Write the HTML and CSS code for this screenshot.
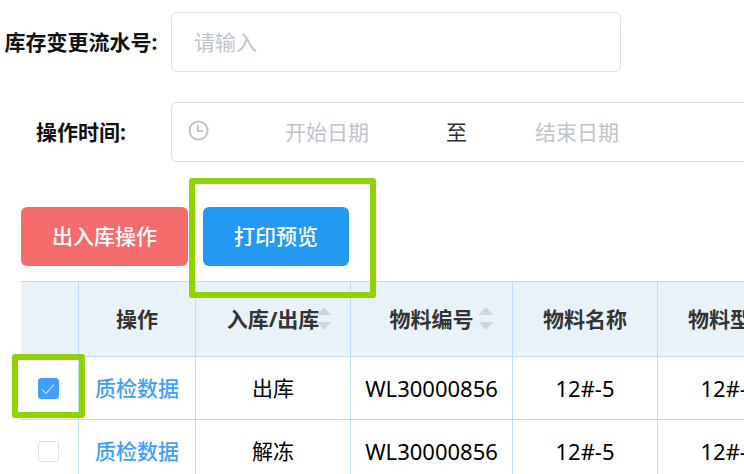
FILE: index.html
```html
<!DOCTYPE html>
<html lang="zh-CN">
<head>
<meta charset="utf-8">
<title>库存变更</title>
<link rel="stylesheet" href="styles.css">
</head>
<body>
<main class="page">
  <form class="filters">
    <div class="field">
      <label class="field-label" for="serial">库存变更流水号:</label>
      <input class="text-input" id="serial" type="text" placeholder="请输入">
    </div>
    <div class="field">
      <label class="field-label" for="start">操作时间:</label>
      <div class="date-range">
        <svg class="clock" viewBox="0 0 20 20" aria-hidden="true"><circle cx="10" cy="10" r="8.6"/><path d="M9.500 5v5.500h5"/></svg>
        <input class="date-input" id="start" type="text" placeholder="开始日期">
        <span class="separator">至</span>
        <input class="date-input" type="text" placeholder="结束日期" aria-label="结束日期">
      </div>
    </div>
  </form>
  <div class="toolbar">
    <button class="button danger" type="button">出入库操作</button>
    <div class="marked">
      <button class="button primary" type="button">打印预览</button>
      <span class="highlight highlight-button"></span>
    </div>
  </div>
  <table class="records">
    <colgroup>
      <col class="col-check"><col class="col-action"><col class="col-type"><col class="col-code"><col class="col-name"><col class="col-name">
    </colgroup>
    <thead>
      <tr>
        <th></th>
        <th>操作</th>
        <th>入库/出库<svg class="sort" viewBox="0 0 14 24" aria-hidden="true"><path d="M7 0l7 8H0zM0 15h14L7 23z"/></svg></th>
        <th>物料编号<svg class="sort" viewBox="0 0 14 24" aria-hidden="true"><path d="M7 0l7 8H0zM0 15h14L7 23z"/></svg></th>
        <th>物料名称</th>
        <th>物料型号</th>
      </tr>
    </thead>
    <tbody>
      <tr>
        <td>
          <div class="marked check-box">
            <input class="check" type="checkbox" aria-label="选择第一行" checked>
            <svg class="tick" viewBox="0 0 21 21" aria-hidden="true"><path d="M4 11.500l4 4 8-9"/></svg>
            <span class="highlight highlight-check"></span>
          </div>
        </td>
        <td><a class="link" href="#">质检数据</a></td>
        <td>出库</td>
        <td class="code">WL30000856</td>
        <td class="code">12#-5</td>
        <td class="code">12#-5</td>
      </tr>
      <tr>
        <td>
          <div class="marked check-box">
            <input class="check" type="checkbox" aria-label="选择第二行">
          </div>
        </td>
        <td><a class="link" href="#">质检数据</a></td>
        <td>解冻</td>
        <td class="code">WL30000856</td>
        <td class="code">12#-5</td>
        <td class="code">12#-5</td>
      </tr>
    </tbody>
  </table>
</main>
</body>
</html>
```
FILE: styles.css
```css
* {
  box-sizing: border-box;
}

body {
  margin: 0;
  overflow: hidden;
  background: #fff;
  color: #000;
  font: 21px/30px "Noto Sans", "Noto Sans CJK SC", sans-serif;
}

input,
button {
  font: inherit;
}

.page {
  padding-top: 12px;
}

.filters {
  display: flex;
  flex-direction: column;
  gap: 30px;
}

.field {
  display: flex;
  align-items: center;
}

.field-label {
  flex: none;
  width: 162px;
  margin-right: 9px;
  color: #111;
  font-weight: 700;
  text-align: center;
  white-space: nowrap;
}

.text-input,
.date-range {
  flex: none;
  height: 60px;
  border: 1px solid #dcdfe6;
  border-radius: 6px;
  background: #fff;
}

.text-input {
  width: 450px;
  padding: 0 22px;
}

.date-range {
  display: flex;
  align-items: center;
  width: 675px;
  padding-left: 16px;
}

.clock {
  flex: none;
  width: 21px;
  height: 21px;
  margin: 0 9px 4px 0;
  fill: none;
  stroke: #c0c4cc;
  stroke-width: 2;
}

.date-input {
  width: 218px;
  padding: 0;
  border: 0;
  background: none;
  text-align: center;
}

.separator {
  width: 32px;
  padding-left: 10px;
  color: #303133;
}

::placeholder {
  color: #c0c4cc;
  opacity: 1;
}

.toolbar {
  display: flex;
  gap: 15px;
  margin: 45px 0 15px 21px;
}

.marked {
  position: relative;
}

.button {
  display: block;
  height: 59px;
  padding: 0 31px 2px;
  border: 0;
  border-radius: 6px;
  color: #fff;
  font-weight: 500;
}

.danger {
  background: #f56c6c;
}

.primary {
  background: #2399f1;
}

.highlight {
  position: absolute;
  z-index: 2;
  border: 6px solid #8fd400;
  border-radius: 3px;
  pointer-events: none;
}

.highlight-button {
  inset: -29px -27px -32px -14px;
}

.highlight-check {
  inset: -24px -26px -19px;
}

.records {
  width: 782px;
  margin-left: 21px;
  border-top: 1px solid #bfdcf7;
  border-collapse: separate;
  border-spacing: 0;
  table-layout: fixed;
}

.col-check {
  width: 58px;
}

.col-action {
  width: 117px;
}

.col-type {
  width: 155px;
}

.col-code {
  width: 162px;
}

.col-name {
  width: 145px;
}

th,
td {
  position: relative;
  height: 63px;
  padding: 0;
  border: solid #bfdcf7;
  border-width: 0 1px 1px 0;
  text-align: center;
  white-space: nowrap;
}

th {
  height: 75px;
  background: #e9f2f9;
  color: #333;
  font-weight: 700;
}

.code {
  font-size: 22px;
}

.sort {
  position: absolute;
  top: 25px;
  right: 19px;
  width: 14px;
  height: 24px;
  fill: #d0d4dc;
}

.link {
  color: #409eff;
  font-weight: 500;
  text-decoration: none;
}

.check-box {
  width: 21px;
  height: 21px;
  margin: 0 auto 0 17px;
}

.check {
  display: block;
  width: 21px;
  height: 21px;
  margin: 0;
  border: 1px solid #dcdfe6;
  border-radius: 3px;
  background: #fff;
  appearance: none;
}

.check:checked {
  border-color: #409eff;
  background: #409eff;
}

.tick {
  position: absolute;
  inset: 0;
  fill: none;
  stroke: #fff;
  stroke-width: 1;
  pointer-events: none;
}
```
